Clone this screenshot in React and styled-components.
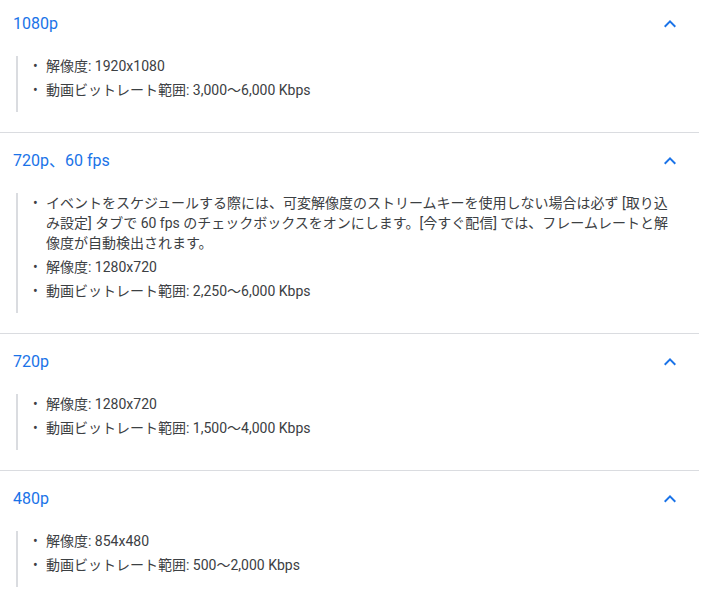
import styled, { createGlobalStyle } from 'styled-components'

const GlobalStyle = createGlobalStyle`
  body {
    margin: 0;
    background: #fff;
    font-family: Roboto, "Noto Sans CJK JP", sans-serif;
  }
`

const sections = [
	{
		title: '1080p',
		items: ['解像度: 1920x1080', '動画ビットレート範囲: 3,000～6,000 Kbps'],
	},
	{
		title: '720p、60 fps',
		items: [
			'イベントをスケジュールする際には、可変解像度のストリームキーを使用しない場合は必ず [取り込み設定] タブで 60 fps のチェックボックスをオンにします。[今すぐ配信] では、フレームレートと解像度が自動検出されます。',
			'解像度: 1280x720',
			'動画ビットレート範囲: 2,250～6,000 Kbps',
		],
	},
	{
		title: '720p',
		items: ['解像度: 1280x720', '動画ビットレート範囲: 1,500～4,000 Kbps'],
	},
	{
		title: '480p',
		items: ['解像度: 854x480', '動画ビットレート範囲: 500～2,000 Kbps'],
	},
]

const Page = styled.div`
  width: 699px;
  margin-top: -5px;
`

const Section = styled.section`
  border-top: 1px solid #dadce0;
  padding-bottom: 20px;

  &:first-child {
    border-top: none;
    padding-top: 1px;
  }
`

const Header = styled.div`
  height: 56px;
  display: flex;
  align-items: center;
  justify-content: space-between;
  padding: 0 17px 0 13px;
  cursor: pointer;
`

const Title = styled.h3`
  margin: 0;
  font-size: 16px;
  font-weight: 400;
  line-height: 24px;
  color: #1a73e8;
`

const Chevron = styled.svg`
  width: 24px;
  height: 24px;
  fill: #1a73e8;
  flex-shrink: 0;
`

const Body = styled.ul`
  margin: 0 21px 0 16px;
  padding: 0 0 12px 15px;
  border-left: 2px solid #dadce0;
  list-style: none;
`

const Item = styled.li`
  display: flex;
  margin-top: 4px;
  font-size: 14px;
  line-height: 20px;
  color: #3c4043;

  &::before {
    content: '•';
    flex: 0 0 13px;
  }
`

const ExpandLess = () => (
	<Chevron viewBox="0 0 24 24">
		<path d="M12 8l-6 6 1.41 1.41L12 10.83l4.59 4.58L18 14z" />
	</Chevron>
)

export default function App() {
	return (
		<Page>
			<GlobalStyle />
			{sections.map((s) => (
				<Section key={s.title}>
					<Header>
						<Title>{s.title}</Title>
						<ExpandLess />
					</Header>
					<Body>
						{s.items.map((t) => (
							<Item key={t}>{t}</Item>
						))}
					</Body>
				</Section>
			))}
		</Page>
	)
}
